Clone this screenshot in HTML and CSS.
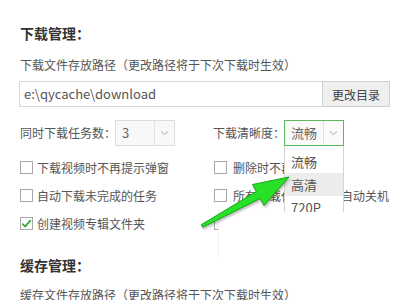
FILE: index.html
```html
<!DOCTYPE html>
<html lang="zh-CN">
<head>
<meta charset="utf-8">
<link rel="stylesheet" href="styles.css">
</head>
<body>
<div class="page">
  <h2 class="title">下载管理：</h2>
  <p class="label">下载文件存放路径（更改路径将于下次下载时生效）</p>
  <div class="path-row">
    <div class="path-input">e:\qycache\download</div>
    <button class="path-btn">更改目录</button>
  </div>
  <div class="grid">
    <div class="cell sel-cell">
      <span class="sel-label">同时下载任务数：</span>
      <div class="select">
        <span class="sel-value">3</span>
        <span class="sel-arrow"><svg width="9" height="6" viewBox="0 0 9 6"><path d="M1 1.5 L4.5 4.5 L8 1.5" fill="none" stroke="#aaa" stroke-width="1"/></svg></span>
      </div>
    </div>
    <div class="cell sel-cell">
      <span class="sel-label">下载清晰度：</span>
      <div class="select active">
        <span class="sel-value">流畅</span>
        <span class="sel-arrow"><svg width="9" height="6" viewBox="0 0 9 6"><path d="M1 1.5 L4.5 4.5 L8 1.5" fill="none" stroke="#aaa" stroke-width="1"/></svg></span>
        <ul class="dropdown">
          <li>流畅</li>
          <li class="hover">高清</li>
          <li>720P</li>
        </ul>
      </div>
    </div>
    <label class="cell check"><span class="box"></span>下载视频时不再提示弹窗</label>
    <label class="cell check"><span class="box"></span>删除时不再提示</label>
    <label class="cell check"><span class="box"></span>自动下载未完成的任务</label>
    <label class="cell check"><span class="box"></span>所有下载任务完成后自动关机</label>
    <label class="cell check"><span class="box checked"><svg width="11" height="9" viewBox="0 0 11 9"><path d="M1.2 4.6 L4.2 7.4 L9.8 1.2" fill="none" stroke="#3aa53a" stroke-width="1.8"/></svg></span>创建视频专辑文件夹</label>
    <label class="cell check hidden-row"><span class="box"></span>下载完成后提示<span class="mask"></span></label>
  </div>
  <h2 class="title title2">缓存管理：</h2>
  <p class="label label2">缓存文件存放路径（更改路径将于下次下载时生效）</p>
</div>
<svg class="arrow" width="120" height="80" viewBox="190 165 120 80">
  <polygon points="201.3,224.7 256.4,191.5 252.5,184.5 289,177 264.1,205.5 260.2,198.5 202.7,227.3" fill="#27e027" stroke="#17a317" stroke-width="1" stroke-linejoin="round"/>
</svg>
</body>
</html>
```
FILE: styles.css
```css
html, body {
  margin: 0;
  padding: 0;
  background: #fff;
  overflow: hidden;
}
body {
  width: 400px;
  height: 300px;
  position: relative;
  font-family: "Noto Sans CJK SC", "Noto Sans", sans-serif;
  color: #555;
}
.page {
  padding: 23px 10px 0 20px;
}
.title {
  margin: 0;
  font-size: 14px;
  line-height: 20px;
  font-weight: bold;
  color: #333;
}
.label {
  margin: 12px 0 0;
  font-size: 12px;
  line-height: 20px;
  color: #555;
  white-space: nowrap;
}
.path-row {
  display: flex;
  margin: 6px 0 0 -1px;
  height: 26px;
}
.path-input {
  box-sizing: border-box;
  width: 303px;
  height: 26px;
  border: 1px solid #d6d6d6;
  border-right: none;
  padding-left: 4px;
  font-size: 13px;
  line-height: 24px;
  color: #555;
}
.path-btn {
  box-sizing: border-box;
  width: 68px;
  height: 26px;
  border: 1px solid #d0d0d0;
  background: #efefef;
  font-family: inherit;
  font-size: 12px;
  color: #444;
  padding: 0;
}
.grid {
  display: grid;
  grid-template-columns: 193px 180px;
  margin-top: 13px;
}
.cell {
  font-size: 12px;
  color: #555;
  white-space: nowrap;
}
.sel-cell {
  display: flex;
  align-items: center;
  height: 26px;
  margin-bottom: 7px;
}
.sel-label {
  line-height: 26px;
}
.select {
  position: relative;
  box-sizing: border-box;
  width: 60px;
  height: 26px;
  margin-left: -1px;
  border: 1px solid #dcdcdc;
  background: #f8f8f8;
  display: flex;
}
.select.active {
  border-color: #5cb85c;
  background: #fafafa;
}
.sel-value {
  flex: 1;
  padding-left: 6px;
  font-size: 13px;
  line-height: 24px;
  color: #666;
}
.sel-arrow {
  width: 19px;
  border-left: 1px solid #e2e2e2;
  display: flex;
  align-items: center;
  justify-content: center;
}
.dropdown {
  position: absolute;
  z-index: 3;
  top: 25px;
  left: -1px;
  width: 60px;
  height: 66px;
  box-sizing: border-box;
  margin: 0;
  padding: 4px 0 0;
  list-style: none;
  background: #fff;
  border: 1px solid #d4d4d4;
  border-top: none;
  border-bottom: none;
  overflow: hidden;
}
.dropdown li {
  height: 23px;
  line-height: 23px;
  padding-left: 6px;
  font-size: 13px;
  color: #555;
}
.dropdown li.hover {
  background: #ececec;
}
.check {
  position: relative;
  display: flex;
  align-items: center;
  height: 28px;
}
.box {
  box-sizing: border-box;
  width: 13px;
  height: 13px;
  border: 1px solid #a8a8a8;
  background: #fff;
  margin-right: 4px;
  flex: none;
  display: flex;
  align-items: center;
  justify-content: center;
}
.check:nth-child(even) .box {
  margin-left: 1px;
  margin-right: 6px;
}
.mask {
  position: absolute;
  z-index: 2;
  left: 5px;
  top: -4px;
  width: 130px;
  height: 54px;
  background: #fff;
  border-left: 1px solid #f2f2f2;
}
.title2 {
  margin-top: 18px;
}
.label2 {
  margin-top: 10px;
}
.arrow {
  position: absolute;
  z-index: 5;
  left: 190px;
  top: 165px;
  filter: drop-shadow(1px 2px 1px rgba(0,0,0,0.25));
}
```
